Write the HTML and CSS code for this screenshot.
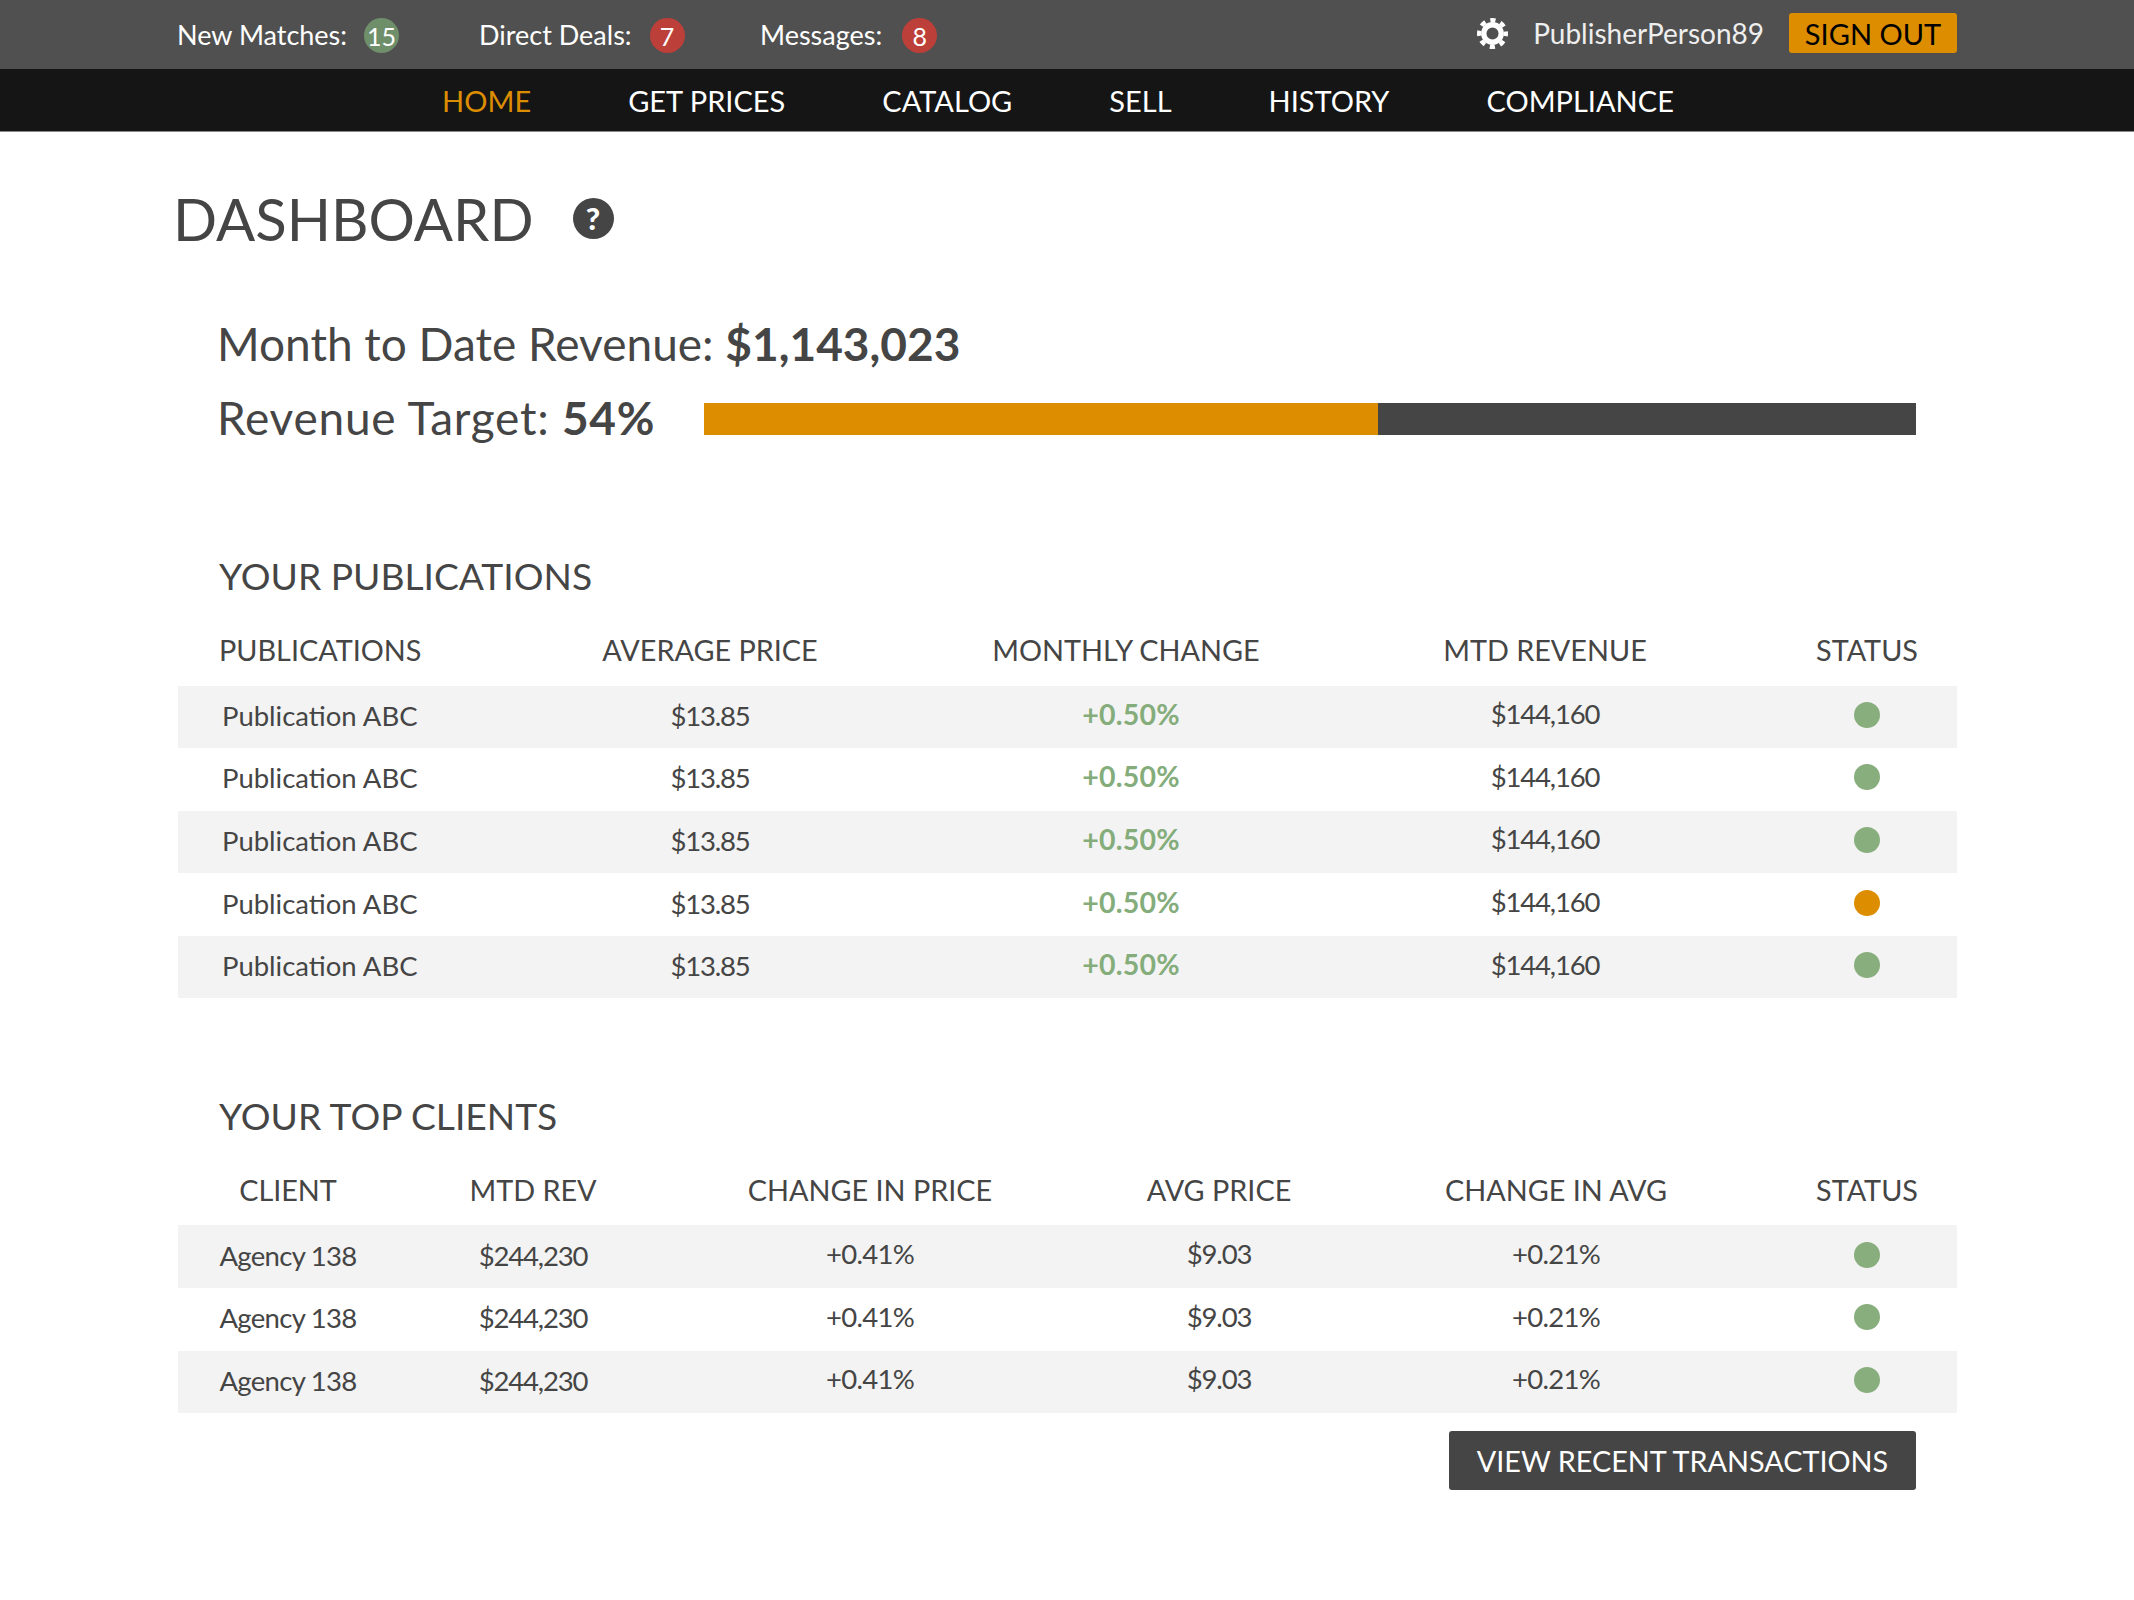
FILE: index.html
```html
<!DOCTYPE html>
<html lang="en">
<head>
  <meta charset="UTF-8">
  <title>Dashboard</title>
  <link rel="stylesheet" href="styles.css">
</head>
<body>

  <div class="topbar">
    <div class="alerts">
      <span class="alert">New Matches: <b class="badge green">15</b></span>
      <span class="alert">Direct Deals: <b class="badge red">7</b></span>
      <span class="alert">Messages: <b class="badge red">8</b></span>
    </div>
    <div class="account">
      <svg class="gear" viewBox="0 0 32 32">
        <circle cx="16" cy="16" r="9" fill="none" stroke="#fff" stroke-width="5.5"/>
        <circle cx="16" cy="16" r="13.75" fill="none" stroke="#fff" stroke-width="4.5" stroke-dasharray="5.4 5.4" stroke-dashoffset="2.7"/>
      </svg>
      <span class="username">PublisherPerson89</span>
      <a class="signout">SIGN OUT</a>
    </div>
  </div>

  <nav class="mainnav">
    <a class="active">HOME</a>
    <a>GET PRICES</a>
    <a>CATALOG</a>
    <a>SELL</a>
    <a>HISTORY</a>
    <a>COMPLIANCE</a>
  </nav>

  <div class="page">
    <h1>DASHBOARD <span class="help">?</span></h1>

    <div class="revenue">
      <div class="rev-line">Month to Date Revenue: <b>$1,143,023</b></div>
      <div class="rev-line target">
        <span class="target-label">Revenue Target: <b>54%</b></span>
        <div class="bar"><div class="bar-fill" style="width:55.6%"></div></div>
      </div>
    </div>

    <h2>YOUR PUBLICATIONS</h2>
    <div class="table pubs">
      <div class="row head"><span class="first">PUBLICATIONS</span><span>AVERAGE PRICE</span><span class="shift">MONTHLY CHANGE</span><span>MTD REVENUE</span><span>STATUS</span></div>
      <div class="row"><span class="first low">Publication ABC</span><span class="low num">$13.85</span><span class="up">+0.50%</span><span class="num">$144,160</span><span><i class="dot"></i></span></div>
      <div class="row"><span class="first low">Publication ABC</span><span class="low num">$13.85</span><span class="up">+0.50%</span><span class="num">$144,160</span><span><i class="dot"></i></span></div>
      <div class="row"><span class="first low">Publication ABC</span><span class="low num">$13.85</span><span class="up">+0.50%</span><span class="num">$144,160</span><span><i class="dot"></i></span></div>
      <div class="row"><span class="first low">Publication ABC</span><span class="low num">$13.85</span><span class="up">+0.50%</span><span class="num">$144,160</span><span><i class="dot warn"></i></span></div>
      <div class="row"><span class="first low">Publication ABC</span><span class="low num">$13.85</span><span class="up">+0.50%</span><span class="num">$144,160</span><span><i class="dot"></i></span></div>
    </div>

    <h2 class="second">YOUR TOP CLIENTS</h2>
    <div class="table clients">
      <div class="row head"><span class="client">CLIENT</span><span>MTD REV</span><span>CHANGE IN PRICE</span><span>AVG PRICE</span><span>CHANGE IN AVG</span><span>STATUS</span></div>
      <div class="row"><span class="client low pct">Agency 138</span><span class="low num">$244,230</span><span class="pct">+0.41%</span><span class="num">$9.03</span><span class="pct">+0.21%</span><span><i class="dot"></i></span></div>
      <div class="row"><span class="client low pct">Agency 138</span><span class="low num">$244,230</span><span class="pct">+0.41%</span><span class="num">$9.03</span><span class="pct">+0.21%</span><span><i class="dot"></i></span></div>
      <div class="row"><span class="client low pct">Agency 138</span><span class="low num">$244,230</span><span class="pct">+0.41%</span><span class="num">$9.03</span><span class="pct">+0.21%</span><span><i class="dot"></i></span></div>
    </div>

    <div class="actions"><a class="btn">VIEW RECENT TRANSACTIONS</a></div>
  </div>

</body>
</html>
```

FILE: styles.css
```css
* { box-sizing: border-box; }
body { margin: 0; background: white; color: #454545; font-family: Lato, sans-serif; }

.topbar { height: 69px; background: #505050; color: white; display: flex; justify-content: space-between; align-items: center; padding: 0 177px; font-size: 27px; }
.alerts { display: flex; }
.alert { display: flex; align-items: center; gap: 18px; }
.alert:nth-child(1) { width: 302px; gap: 17px; }
.alert:nth-child(2) { width: 281px; }
.alert:nth-child(3) { gap: 20px; }
.badge { width: 35px; height: 35px; border-radius: 50%; display: flex; align-items: center; justify-content: center; font-weight: normal; font-size: 25px; margin-top: 2px; }
.green { background: #6f8f6a; }
.red { background: #bd3f39; }
.account { display: flex; align-items: center; margin-top: -3px; }
.gear { width: 31px; height: 31px; margin-right: 25px; }
.username { margin-right: 25px; color: #eee; font-size: 28px; }
.signout { height: 40px; width: 168px; background: #dc8e00; color: #000; border-radius: 3px; font-size: 29px; display: flex; align-items: center; justify-content: center; }

.mainnav { height: 63px; background: #151515; border-bottom: 1px solid #888; display: flex; justify-content: center; align-items: center; gap: 97px; color: white; font-size: 29px; padding-right: 18px; }
.active { color: #dc8e00; }

.page { padding: 0 177px 0 178px; }
h1 { margin: 0 0 0 -5px; padding-top: 51px; height: 175.5px; font-weight: normal; font-size: 58px; line-height: 72px; display: flex; align-items: flex-start; gap: 39px; }
.help { width: 41px; height: 41px; margin-top: 15px; border-radius: 50%; background: #454545; color: white; font-weight: 900; font-size: 31px; line-height: 41px; text-align: center; }

.revenue { padding: 0 41px 0 39px; }
.rev-line { font-size: 46px; line-height: 72px; height: 74px; }
.target { display: flex; align-items: flex-start; gap: 49px; }
.target-label { letter-spacing: .75px; }
.bar { flex: 1; height: 32px; margin-top: 21px; background: #454545; }
.bar-fill { height: 100%; background: #dc8e00; }

h2 { margin: 95.5px 0 0 41px; font-weight: normal; font-size: 37.2px; line-height: 50px; }
h2.second { margin-top: 92.5px; }

.table { margin-top: 13.5px; }
.row { display: grid; height: 62.6px; padding-bottom: 6px; align-items: center; font-size: 27.5px; text-align: center; }
.row:nth-child(even) { background: #f3f3f3; }
.pubs .row { grid-template-columns: 295px 474px 366px 464px 180px; }
.clients .row { grid-template-columns: 251px 208px 466px 232px 442px 180px; }
.row.head { font-size: 28.8px; height: 71px; padding-bottom: 0; }
.first { text-align: left; padding-left: 44px; }
.head .first { padding-left: 41px; }
.client { padding-right: 31px; }
.shift { margin-left: -8px; }
.low { padding-top: 3px; }
.num { letter-spacing: -1.2px; }
.pct { letter-spacing: -.7px; }
.up { color: #84ad7b; font-weight: bold; font-size: 28.5px; letter-spacing: .2px; padding-left: 2px; }
.dot { display: block; width: 26px; height: 26px; margin: 2px auto 0; border-radius: 50%; background: #89ae7e; }
.warn { background: #dc8e00; }

.actions { display: flex; justify-content: flex-end; padding: 18px 41px 0 0; }
.btn { width: 467px; height: 59px; background: #454545; color: white; border-radius: 3px; font-size: 28.8px; display: flex; align-items: center; justify-content: center; }
```
